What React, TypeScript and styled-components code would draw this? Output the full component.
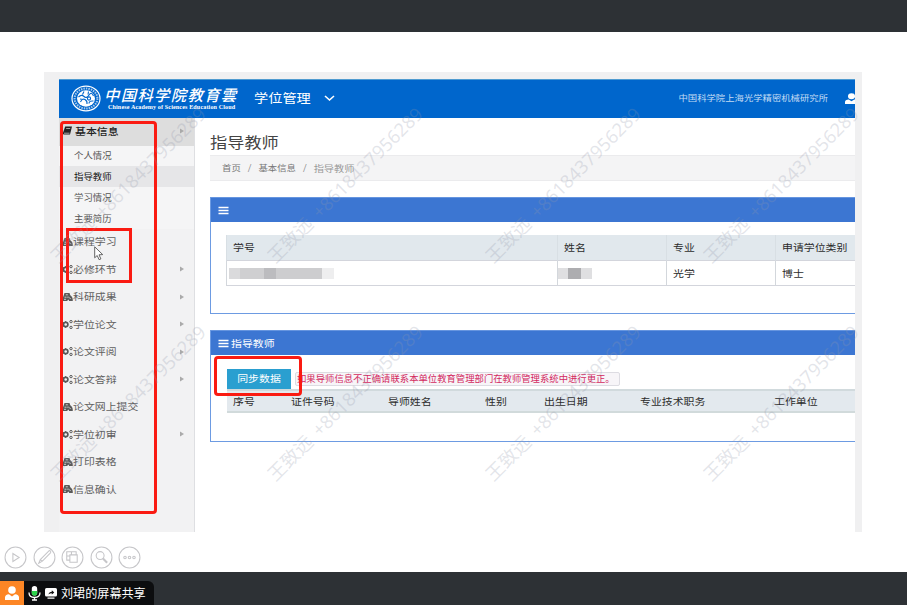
import React from "react";
import styled, { createGlobalStyle } from "styled-components";

const GlobalStyle = createGlobalStyle`
  * { box-sizing: border-box; }
  body {
    margin: 0;
    overflow: hidden;
    font-family: "Noto Sans CJK SC", "Noto Sans", sans-serif;
  }
`;

const Screen = styled.div`
  position: relative;
  display: flex;
  flex-direction: column;
  width: 907px;
  height: 605px;
  background: #2d3135;
  overflow: hidden;
`;

const Slide = styled.div`
  position: relative;
  margin-top: 32px;
  height: 540px;
  padding: 40px 0 0 44px;
  flex: none;
  background: #fff;
`;

const Capture = styled.div`
  width: 818px;
  height: 460px;
  padding: 7px 7px 0 15px;
  display: flex;
  flex-direction: column;
  background: #f0f0f1;
`;

/* Glyphs are a little wider than tall throughout the captured page. */
const Label = styled.span<{ $size?: number; $color?: string; $weight?: number; $squash?: number }>`
  display: inline-block;
  white-space: nowrap;
  line-height: 1;
  font-size: ${(p) => p.$size ?? 10.9}px;
  color: ${(p) => p.$color ?? "#2c2c2c"};
  font-weight: ${(p) => p.$weight ?? 400};
  transform: scaleY(${(p) => p.$squash ?? 0.88});
`;

const Header = styled.header`
  height: 39px;
  flex: none;
  display: flex;
  align-items: center;
  padding: 0 0 2px 12px;
  background: #0066cc;
  border-top: 1px solid #4f9bd0;
  overflow: hidden;
  color: #fff;
`;

const Brand = styled.div`
  margin-left: 3px;
  width: 150px;
  display: flex;
  flex-direction: column;
  align-items: flex-start;
`;

const BrandName = styled.div`
  font-size: 15.4px;
  line-height: 17px;
  letter-spacing: 1.3px;
  font-weight: 500;
  font-style: italic;
  white-space: nowrap;
`;

const BrandSub = styled.div`
  margin: 1px 0 0 4px;
  font: bold 6.1px/7px "Liberation Serif", serif;
  letter-spacing: 0.13px;
  white-space: nowrap;
`;

const Chevron = styled.svg`
  margin-left: 13px;
`;

const Institute = styled.div`
  margin-left: auto;
  display: flex;
  align-items: center;
  gap: 17px;
  margin-right: -3px;
  height: 100%;
`;

const Body = styled.div`
  display: flex;
  flex: 1;
  min-height: 0;
`;

const Sidebar = styled.nav`
  width: 136px;
  flex: none;
  background: #f2f2f3;
  border-right: 1px solid #dedfe2;
`;

const MenuRow = styled.div<{ $head?: boolean }>`
  display: flex;
  align-items: center;
  height: 27.5px;
  padding: 0 10px 1px 3px;
  background: ${(p) => (p.$head ? "#dddddd" : "transparent")};
  gap: ${(p) => (p.$head ? 2 : 0)}px;
  svg:last-child { margin-left: auto; }
`;

const SubRow = styled.div<{ $active?: boolean }>`
  display: flex;
  align-items: center;
  height: 20.8px;
  padding-left: 15px;
  background: ${(p) => (p.$active ? "#e6e6e8" : "#f5f5f6")};
`;

const Main = styled.main`
  flex: 1;
  min-width: 0;
  padding-left: 15px;
  background: #fff;
`;

const Title = styled.div`
  height: 37px;
  display: flex;
  align-items: center;
  padding-top: 10px;
`;

const Crumbs = styled.div`
  height: 26px;
  display: flex;
  align-items: center;
  gap: 7px;
  padding-left: 12px;
  margin-bottom: 16px;
  background: #f4f4f5;
  border-top: 1px solid #ebebed;
  border-bottom: 1px solid #ebebed;
`;

const Panel = styled.section<{ $height: number }>`
  height: ${(p) => p.$height}px;
  margin-bottom: 16px;
  border-left: 1px solid #6d9be2;
  border-bottom: 1px solid #6d9be2;
`;

const PanelHead = styled.div`
  height: 25px;
  padding-left: 7px;
  display: flex;
  align-items: center;
  gap: 2px;
  background: #3c76d2;
  border-top: 1px solid #6695df;
`;

const StudentTable = styled.div`
  margin: 13px 0 0 15px;
  display: grid;
  grid-template-columns: 331px 109px 109px 1fr;
  grid-template-rows: 26px 25px;
`;

const Cell = styled.div<{ $head?: boolean }>`
  display: flex;
  align-items: center;
  padding-left: 6px;
  white-space: nowrap;
  background: ${(p) => (p.$head ? "#e1e8ed" : "#fff")};
  border-left: 1px solid ${(p) => (p.$head ? "#d8dfe4" : "#d3d7dc")};
  border-bottom: 1px solid #d3d5dc;
`;

const Mosaic = styled.div<{ $name?: boolean }>`
  display: flex;
  margin-left: ${(p) => (p.$name ? -6 : -4)}px;
  height: 11px;
`;

const Tile = styled.i<{ $w: number; $c: string }>`
  width: ${(p) => p.$w}px;
  background: ${(p) => p.$c};
`;

const Actions = styled.div`
  display: flex;
  align-items: center;
  gap: 4px;
  margin: 13px 0 0 16px;
  height: 21px;
`;

const SyncButton = styled.button`
  width: 64px;
  height: 20px;
  flex: none;
  padding: 0;
  border: 0;
  background: #2a9fd0;
  font-family: inherit;
  display: flex;
  align-items: center;
  justify-content: center;
`;

const Note = styled.div`
  width: 325px;
  height: 14px;
  padding-left: 1px;
  display: flex;
  align-items: center;
  border: 1px solid #dddce2;
  border-radius: 2px;
  background: #f7f5f8;
`;

const TutorHead = styled.div`
  margin: 0 0 0 16px;
  height: 24px;
  padding-left: 6px;
  display: grid;
  grid-template-columns: 58px 97px 97px 59px 96px 134px 1fr;
  align-items: center;
  justify-items: start;
  background: #e3e9ee;
  border-top: 2px solid #d1dadd;
  border-bottom: 2px solid #d1dadb;
`;

const Frame = styled.div<{ $x: number; $y: number; $w: number; $h: number; $r?: number }>`
  position: absolute;
  left: ${(p) => p.$x}px;
  top: ${(p) => p.$y}px;
  width: ${(p) => p.$w}px;
  height: ${(p) => p.$h}px;
  border: 3px solid #fa1b12;
  border-radius: ${(p) => p.$r ?? 0}px;
`;

const Pointer = styled.svg`
  position: absolute;
  left: 94px;
  top: 246px;
`;

/* Watermark stamps, rotated about the centre of each line of text. */
const Stamp = styled.div<{ $x: number; $y: number }>`
  position: absolute;
  left: ${(p) => p.$x}px;
  top: ${(p) => p.$y}px;
  transform: translate(-50%, -50%) rotate(-45deg);
  font-size: 18.4px;
  word-spacing: 3px;
  line-height: 1;
  white-space: nowrap;
  color: rgba(145, 150, 170, 0.25);
  font-family: "Noto Sans", "Noto Sans CJK SC", sans-serif;
  font-weight: 400;
  pointer-events: none;
`;

const ShowTools = styled.div`
  position: absolute;
  left: 4px;
  top: 514px;
  display: flex;
  gap: 5.6px;
`;

const ShareTag = styled.footer`
  margin-top: 9px;
  width: 154px;
  height: 24px;
  display: flex;
  align-items: center;
  background: #0c0d0f;
  border-radius: 0 6px 0 0;
  overflow: hidden;
`;

const Avatar = styled.div`
  width: 24px;
  height: 24px;
  flex: none;
  display: flex;
  align-items: center;
  justify-content: center;
  background: #fd8625;
`;

const TagIcons = styled.div`
  display: flex;
  align-items: center;
  gap: 4px;
  margin: 0 4px 0 4px;
`;

const Person = ({ w = 14, h = 14 }: { w?: number; h?: number }) => (
  <svg width={w} height={h} viewBox="0 0 14 14" preserveAspectRatio="none" fill="#fff">
    <circle cx="7" cy="4" r="3.8" />
    <path d="M0 14v-2.5Q0 8.6 4 8.2L7 10.4l3-2.2q4 .4 4 3.3V14z" />
  </svg>
);

const Seal = () => (
  <svg width="30" height="27" viewBox="0 0 30 27" fill="none" stroke="#fff">
    <ellipse cx="15" cy="13.5" rx="14" ry="12.4" strokeWidth="1.2" />
    <ellipse cx="15" cy="13.5" rx="11.4" ry="10" strokeWidth="2" strokeDasharray="1.5 1" opacity=".65" />
    <ellipse cx="15" cy="13.5" rx="9" ry="8.2" fill="#fff" stroke="none" />
    <g stroke="#0066cc" strokeWidth="1.1">
      <path d="M7.5 12q3-3 5.5-.5t5-1.5 4.5 1M9.5 17q2-4 4.5-2.5t2 4.5M13 6.5l-1.5 3M17.5 6.5l-.5 3M18 18.5q0-3 4.5-2.5M9 14l3 .5" />
      <circle cx="18" cy="13.5" r="1.6" />
    </g>
  </svg>
);

const Caret = () => (
  <svg width="4" height="6" viewBox="0 0 4 6"><path d="M0 .5L4 3 0 5.5z" fill="#aaa" /></svg>
);

const Book = () => (
  <svg width="11" height="10" viewBox="0 0 11 10">
    <path d="M3.2.5H10L8 8.5H1.8Q.4 8.5 1 6.7z" fill="#222" />
    <path d="M4.2 2.5h4M2 7.2h5.5" stroke="#ddd" strokeWidth=".7" />
  </svg>
);

const Gears = () => (
  <svg width="11" height="11" viewBox="0 0 11 11" fill="none" stroke="#585858">
    <circle cx="3.7" cy="5.5" r="2.2" strokeWidth="1.7" />
    <path d="M3.7 2v1M3.7 8v1M.2 5.5h1M1.3 3l1 1M1.3 8l1-1" strokeWidth="1" />
    <circle cx="9" cy="2.6" r="1.2" />
    <circle cx="9" cy="8.4" r="1.2" />
  </svg>
);

const Books = () => (
  <svg width="11" height="10" viewBox="0 0 11 10">
    <path d="M2.5 1h5l.8 2.2q2.7 1.5 2.5 5.8H7.2L6.5 7.5 5 9H.3L1 5.2z" fill="#5a5a5a" />
    <path d="M3.8 2.8h2M2.5 5.2h2M7.5 5.5l1 1.5M2 7.3h2M6 4.5V6" stroke="#e8e8e8" strokeWidth=".8" fill="none" />
  </svg>
);

const Bars = () => (
  <svg width="11" height="9" viewBox="0 0 11 9">
    <path d="M.5 1.5h10M.5 4.5h10M.5 7.5h10" stroke="#fff" strokeWidth="1.4" />
  </svg>
);

const toolShapes = [
  <path d="M8.5 7.2v7.6l6-3.8z" />,
  <path d="M5.5 16.5l1.5-3.5L15 4.8q1-.8 1.7 0t0 1.7L9 14.5zM7 13l2 1.5" />,
  <path d="M8 13.5H5.5v-8h9v2.5M5.5 9.5H8M10 5.5V8M8.5 8.5h7v7h-7z" />,
  <><circle cx="9.7" cy="9.2" r="3.8" /><path d="M12.4 12l4 4" strokeWidth="2" /></>,
  <><circle cx="6.7" cy="11" r="1.2" /><circle cx="11" cy="11" r="1.2" /><circle cx="15.3" cy="11" r="1.2" /></>,
];

const subItems = ["个人情况", "指导教师", "学习情况", "主要简历"];
const menuItems: { text: string; gears?: boolean; caret?: boolean }[] = [
  { text: "课程学习" },
  { text: "必修环节", gears: true, caret: true },
  { text: "科研成果", caret: true },
  { text: "学位论文", gears: true, caret: true },
  { text: "论文评阅", gears: true, caret: true },
  { text: "论文答辩", gears: true, caret: true },
  { text: "论文网上提交" },
  { text: "学位初审", gears: true, caret: true },
  { text: "打印表格" },
  { text: "信息确认" },
];
const tutorColumns = ["序号", "证件号码", "导师姓名", "性别", "出生日期", "专业技术职务", "工作单位"];
const stampColumns = [127.5, 345, 562.8, 780.5];
const stampRows = [184.5, 402.5];

export default function App() {
  return (
    <Screen>
      <GlobalStyle />
      <Slide>
        <Capture>
          <Header>
            <Seal />
            <Brand>
              <BrandName>中国科学院教育雲</BrandName>
              <BrandSub>Chinese Academy of Sciences Education Cloud</BrandSub>
            </Brand>
            <Label $size={14.2} $color="#fff">学位管理</Label>
            <Chevron width="11" height="7" viewBox="0 0 11 7">
              <path d="M1 1l4.5 4L10 1" fill="none" stroke="#fff" strokeWidth="1.6" />
            </Chevron>
            <Institute>
              <Label $size={9.35} $color="#c4dcf4">中国科学院上海光学精密机械研究所</Label>
              <Person w={13} h={11} />
            </Institute>
          </Header>
          <Body>
            <Sidebar>
              <MenuRow $head>
                <Book />
                <Label $color="#222" $weight={500}>基本信息</Label>
                <Caret />
              </MenuRow>
              {subItems.map((text, i) => (
                <SubRow key={text} $active={i === 1}>
                  <Label $size={9.4} $color={i === 1 ? "#111" : "#555"} $squash={0.95}>{text}</Label>
                </SubRow>
              ))}
              {menuItems.map((m) => (
                <MenuRow key={m.text}>
                  {m.gears ? <Gears /> : <Books />}
                  <Label $color="#606060">{m.text}</Label>
                  {m.caret && <Caret />}
                </MenuRow>
              ))}
            </Sidebar>
            <Main>
              <Title><Label $size={17.2} $color="#444">指导教师</Label></Title>
              <Crumbs>
                <Label $size={9.4} $color="#777">首页</Label>
                <Label $size={9.4} $color="#888">/</Label>
                <Label $size={9.4} $color="#777">基本信息</Label>
                <Label $size={9.4} $color="#888">/</Label>
                <Label $size={10.2} $color="#999">指导教师</Label>
              </Crumbs>
              <Panel $height={117}>
                <PanelHead><Bars /></PanelHead>
                <StudentTable>
                  <Cell $head><Label>学号</Label></Cell>
                  <Cell $head><Label>姓名</Label></Cell>
                  <Cell $head><Label>专业</Label></Cell>
                  <Cell $head><Label>申请学位类别</Label></Cell>
                  <Cell>
                    <Mosaic>
                      <Tile $w={11} $c="#dadadc" /><Tile $w={24} $c="#cfcfd1" />
                      <Tile $w={12} $c="#bcbcbf" /><Tile $w={46} $c="#cdcdcf" /><Tile $w={12} $c="#eeeeef" />
                    </Mosaic>
                  </Cell>
                  <Cell>
                    <Mosaic $name>
                      <Tile $w={10} $c="#dfdfe1" /><Tile $w={13} $c="#adadb0" /><Tile $w={11} $c="#dfdfe1" />
                    </Mosaic>
                  </Cell>
                  <Cell><Label>光学</Label></Cell>
                  <Cell><Label>博士</Label></Cell>
                </StudentTable>
              </Panel>
              <Panel $height={112}>
                <PanelHead><Bars /><Label $color="#fff">指导教师</Label></PanelHead>
                <Actions>
                  <SyncButton><Label $color="#fff">同步数据</Label></SyncButton>
                  <Note>
                    <Label $size={9.35} $color="#d3295f" $squash={0.98}>
                      如果导师信息不正确请联系本单位教育管理部门在教师管理系统中进行更正。
                    </Label>
                  </Note>
                </Actions>
                <TutorHead>
                  {tutorColumns.map((c) => <Label key={c}>{c}</Label>)}
                </TutorHead>
              </Panel>
            </Main>
          </Body>
        </Capture>
        <ShowTools>
          {toolShapes.map((shape, i) => (
            <svg key={i} width="23" height="23" viewBox="0 0 22 22" fill="none" stroke="#c6c6c9" strokeWidth="1">
              <circle cx="11" cy="11" r="10" />
              {shape}
            </svg>
          ))}
        </ShowTools>
      </Slide>
      <ShareTag>
        <Avatar><Person /></Avatar>
        <TagIcons>
          <svg width="13" height="15" viewBox="0 0 13 15" fill="none">
            <rect x="3.8" y="0" width="5.4" height="9.5" rx="2.7" fill="#fff" />
            <path d="M3.8 5h5.4v2a2.7 2.7 0 0 1-5.4 0z" fill="#2ed34c" />
            <path d="M1 6.5q0 5 5.5 5t5.5-5M6.5 11.5V14M4 14h5" stroke="#fff" strokeWidth="1.3" />
          </svg>
          <svg width="12" height="12" viewBox="0 0 12 12">
            <rect x="0" y="1" width="12" height="8.5" rx="1.5" fill="#fff" />
            <path d="M2.5 11.2h7" stroke="#fff" strokeWidth="1.3" />
            <path d="M3.5 7.5Q4 4.8 6.8 4.8V3.2L9.3 5.5 6.8 7.5V6.2Q4.8 6.2 3.5 7.5z" fill="#111" />
          </svg>
        </TagIcons>
        <Label $size={12.1} $color="#fff" $squash={1}>刘珺的屏幕共享</Label>
      </ShareTag>
      <Frame $x={60} $y={121} $w={97} $h={393} $r={4} />
      <Frame $x={66} $y={228} $w={66} $h={55} />
      <Frame $x={214} $y={356} $w={88} $h={40} $r={4} />
      <Pointer width="10" height="15" viewBox="0 0 10 15">
        <path d="M.7.8v11l2.5-2.3 1.9 4.2 1.8-.8L5 8.8l3.7-.2z" fill="#fff" stroke="#555" strokeWidth=".9" />
      </Pointer>
      {stampRows.map((y) => stampColumns.map((x) => (
        <Stamp key={`${x}-${y}`} $x={x} $y={y}>王致远 +8618437956289</Stamp>
      )))}
    </Screen>
  );
}
